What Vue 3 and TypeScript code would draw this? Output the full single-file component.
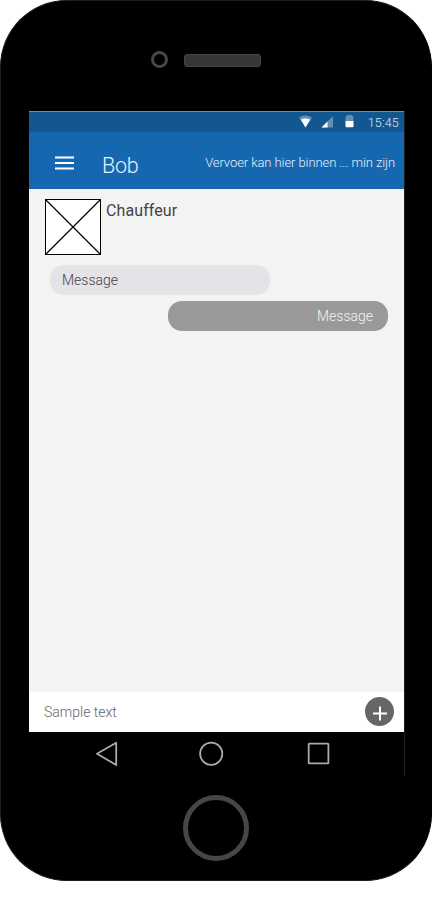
<script setup lang="ts">
interface Message {
  id: number
  text: string
  own: boolean
}

const messages: Message[] = [
  { id: 1, text: 'Message', own: false },
  { id: 2, text: 'Message', own: true },
]
</script>

<template>
  <div class="phone">
    <div class="bezel">
      <span class="camera"></span>
      <span class="speaker"></span>
    </div>

    <div class="screen">
      <div class="status">
        <svg class="status-icons" width="56" height="14" viewBox="0 0 56 14">
          <path d="M0 2.600Q6.500-1.400 13 2.600L6.500 12.500Z" fill="#6490b8" />
          <path d="M1.800 4.600Q6.500 2.400 11.200 4.600L6.500 12.500Z" fill="#fff" />
          <path d="M34 1V12.500H22.500Z" fill="#6490b8" />
          <path d="M28.500 6.500V12.500H22.500Z" fill="#fff" />
          <path d="M48.500 0h4q2 .8 2 3V7h-8V3q0-2.200 2-3Z" fill="#6490b8" />
          <path d="M46.500 6h8v5.300q0 1-1 1h-6q-1 0-1-1Z" fill="#fff" />
        </svg>
        <span class="clock">15:45</span>
      </div>

      <header class="appbar">
        <svg class="menu" width="19" height="14" viewBox="0 0 19 14">
          <path d="M0 1.500h19M0 7h19M0 12.500h19" stroke="#fff" stroke-width="2" />
        </svg>
        <h1 class="title">Bob</h1>
        <span class="notice">Vervoer kan hier binnen ... min zijn</span>
      </header>

      <main class="chat">
        <div class="contact">
          <svg class="avatar" width="56" height="56" viewBox="0 0 56 56">
            <rect x=".5" y=".5" width="55" height="55" fill="#fff" stroke="#000" />
            <path d="M.5.5l55 55M55.500.5l-55 55" stroke="#000" stroke-width="1.200" />
          </svg>
          <span class="name">Chauffeur</span>
        </div>
        <div
          v-for="message in messages"
          :key="message.id"
          class="bubble"
          :class="{ own: message.own }"
        >
          <span>{{ message.text }}</span>
        </div>
      </main>

      <div class="composer">
        <span class="placeholder">Sample text</span>
        <button class="add" aria-label="Add">
          <svg width="29" height="29" viewBox="0 0 29 29">
            <path d="M8 16.500h14M15 9.500v14" stroke="#fff" stroke-width="2" />
          </svg>
        </button>
      </div>

      <nav class="navbar">
        <svg width="375" height="44" viewBox="0 0 375 44" fill="none" stroke="#aaa" stroke-width="1.800">
          <path d="M87.200 10.700V33L68 21.800Z" stroke-linejoin="round" />
          <circle cx="182.200" cy="21.700" r="11.100" />
          <rect x="279.700" y="11.700" width="19.700" height="19.700" rx=".6" />
        </svg>
      </nav>
    </div>

    <div class="home"></div>
  </div>
</template>

<style>
body {
  margin: 0;
  background: #fff;
}
</style>

<style scoped>
.phone {
  box-sizing: border-box;
  width: 432px;
  height: 881px;
  border: 1px solid #1c1c1c;
  border-right-color: #000;
  border-radius: 67px;
  background: #000;
  font-family: Roboto, "Liberation Sans", sans-serif;
  font-weight: 300;
  display: flex;
  flex-direction: column;
  overflow: hidden;
}

.bezel {
  height: 110px;
  flex: none;
  box-sizing: border-box;
  padding: 50px 0 0 150px;
  display: flex;
  align-items: flex-start;
}

.camera {
  box-sizing: border-box;
  width: 17px;
  height: 17px;
  border: 3px solid #484848;
  border-radius: 50%;
}

.speaker {
  box-sizing: border-box;
  width: 77px;
  height: 13px;
  margin: 3px 0 0 16px;
  border: 1px solid #444;
  border-radius: 3px;
  background: #373737;
}

.screen {
  box-sizing: border-box;
  width: 376px;
  height: 665px;
  flex: none;
  margin-left: 28px;
  border-right: 1px solid #202020;
  display: flex;
  flex-direction: column;
}

.status {
  box-sizing: border-box;
  height: 21px;
  border-top: 1px solid #888;
  background: #135791;
  display: flex;
  justify-content: flex-end;
  align-items: flex-start;
  padding-right: 5px;
}

.status-icons {
  margin: 3px 13px 0 0;
}

.clock {
  font-size: 12.500px;
  line-height: 22px;
  letter-spacing: 0.2px;
  color: #dfe8f1;
}

.appbar {
  height: 57px;
  background: #1567b0;
  display: flex;
  align-items: center;
  color: #eaf1f8;
}

.menu {
  margin: 4px 0 0 26px;
}

.title {
  margin: 10px 0 0 28px;
  font-size: 21.500px;
  font-weight: 300;
  line-height: 28px;
  letter-spacing: -0.3px;
}

.notice {
  margin: 4px 9px 0 auto;
  font-size: 13px;
  line-height: 18px;
  letter-spacing: -0.08px;
  white-space: nowrap;
}

.chat {
  box-sizing: border-box;
  height: 503px;
  background: #f3f3f3;
  padding: 10px 16px 0;
  display: flex;
  flex-direction: column;
}

.contact {
  display: flex;
  align-items: flex-start;
  margin-bottom: 10px;
}

.name {
  margin-left: 5px;
  font-size: 16px;
  font-weight: 400;
  line-height: 24px;
  letter-spacing: 0.1px;
  color: #444;
}

.bubble {
  box-sizing: border-box;
  width: 220px;
  height: 30px;
  margin: 0 0 6px 5px;
  padding: 0 12px;
  border-radius: 14px;
  background: #e4e3e8;
  font-size: 14px;
  line-height: 30px;
  color: #444;
}

.bubble.own {
  align-self: flex-end;
  padding: 0 15px;
  background: #999;
  text-align: right;
  color: #f4f4f4;
}

.composer {
  box-sizing: border-box;
  height: 40px;
  padding: 0 10px 0 15px;
  background: #fff;
  display: flex;
  align-items: center;
  justify-content: space-between;
}

.placeholder {
  font-size: 14px;
  line-height: 20px;
  color: #666;
}

.add {
  width: 29px;
  height: 29px;
  margin: 0 0 1px;
  padding: 0;
  border: 0;
  border-radius: 50%;
  background: #666;
}

.add svg,
.navbar svg {
  display: block;
}

.navbar {
  height: 44px;
}

.home {
  box-sizing: border-box;
  width: 66px;
  height: 66px;
  flex: none;
  margin: 19px 0 0 182px;
  border: 5px solid #464646;
  border-radius: 50%;
}
</style>
